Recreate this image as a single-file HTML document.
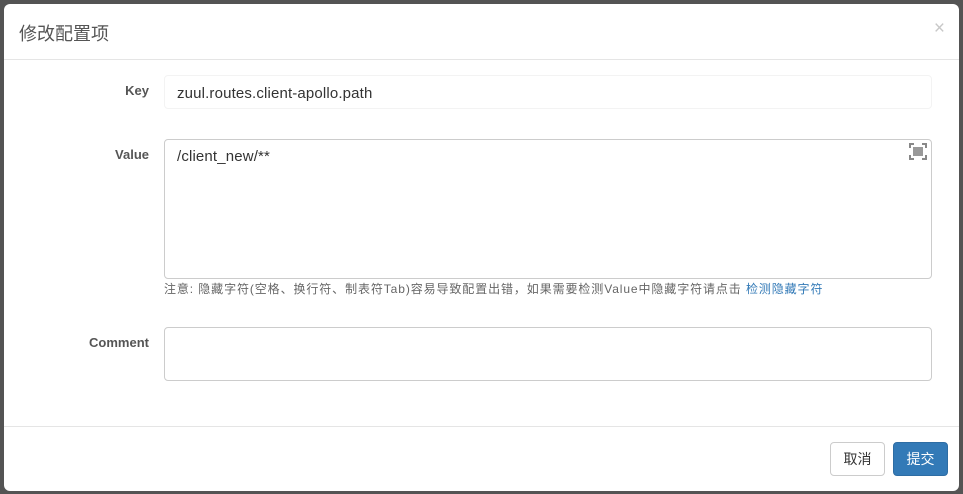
<!DOCTYPE html>
<html><head><meta charset="utf-8"><style>
*{box-sizing:border-box;margin:0;padding:0}
body{width:963px;height:494px;background:#545454;font-family:"Liberation Sans","Noto Sans CJK SC",sans-serif;position:relative;overflow:hidden}
.m{position:absolute;left:4px;top:4px;width:955px;height:487px;background:#fff;border-radius:6px}
.h{position:absolute;left:0;top:0;width:100%;height:56px;border-bottom:1px solid #e5e5e5}
.t{position:absolute;left:15px;top:16px;font-size:18px;color:#555}
.x{position:absolute;right:14px;top:14px;font-size:19px;color:#c8c8c8}
.lab{position:absolute;width:145px;text-align:right;font-size:13px;font-weight:bold;color:#555}
.in{position:absolute;left:160px;width:768px;border:1px solid #ccc;border-radius:4px;font-size:15px;letter-spacing:0.15px;color:#333;padding:8px 12px}
.n{position:absolute;left:160px;top:276px;font-size:12px;letter-spacing:0.9px;color:#666;white-space:nowrap}
.n a{color:#337ab7}
.f{position:absolute;left:0;top:422px;width:100%;border-top:1px solid #e5e5e5}
.b{position:absolute;top:438px;width:55px;height:34px;border-radius:4px;font-size:14px;text-align:center;line-height:32px}
</style></head><body>
<div class="m">
<div class="h"><div class="t">修改配置项</div><div class="x">×</div></div>
<div class="lab" style="top:79px">Key</div>
<div class="in" style="top:71px;height:34px;border-color:#f3f3f3;padding-top:9px">zuul.routes.client-apollo.path</div>
<div class="lab" style="top:143px">Value</div>
<div class="in" style="top:135px;height:140px">/client_new/**</div>
<svg style="position:absolute;left:905px;top:139px" width="18" height="17" viewBox="0 0 18 17"><path d="M1 5V1h4M13 1h4v4M17 12v4h-4M5 16H1v-4" fill="none" stroke="#888" stroke-width="2"/><rect x="4" y="4" width="10" height="9" fill="#999"/></svg>
<div class="n">注意: 隐藏字符(空格、换行符、制表符Tab)容易导致配置出错，如果需要检测Value中隐藏字符请点击 <a>检测隐藏字符</a></div>
<div class="lab" style="top:331px">Comment</div>
<div class="in" style="top:323px;height:54px"></div>
<div class="f"></div>
<div class="b" style="left:826px;border:1px solid #ccc;color:#333;background:#fff">取消</div>
<div class="b" style="left:889px;background:#337ab7;border:1px solid #2e6da4;color:#fff">提交</div>
</div>
</body></html>
